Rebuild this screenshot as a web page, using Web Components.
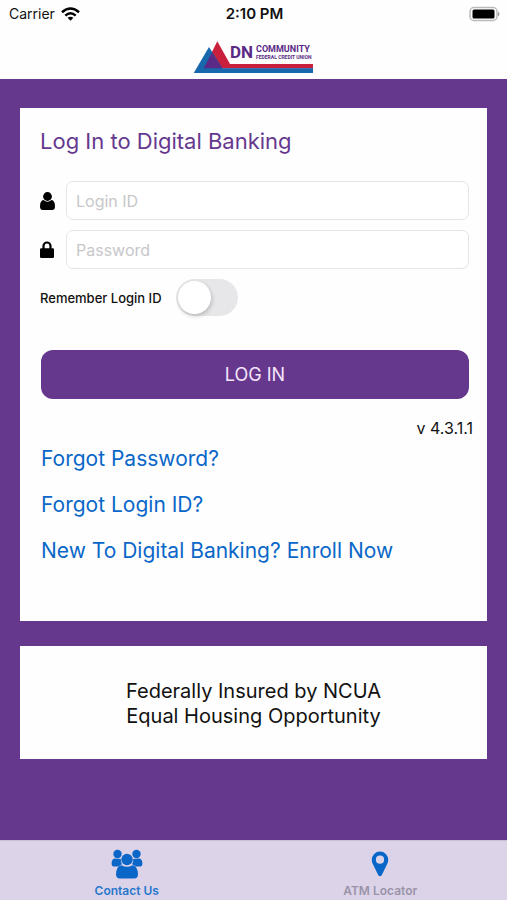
<!DOCTYPE html>
<html lang="en">
<head>
<meta charset="utf-8">
<meta name="viewport" content="width=device-width, initial-scale=1">
<title>DN Community Federal Credit Union</title>
<style>
  body { margin: 0; font-family: Inter, "Liberation Sans", sans-serif; color: #111; background: #65388e; --brand: #65388e; --link: #0a67c8; }
</style>
</head>
<body>
<bank-app>
  <status-bar slot="top" carrier="Carrier" time="2:10 PM"></status-bar>
  <bank-logo slot="top"></bank-logo>
  <bank-card>
    <login-form version="v 4.3.1.1"></login-form>
    <link-list>
      <a href="#password">Forgot Password?</a>
      <a href="#login-id">Forgot Login ID?</a>
      <a href="#enroll">New To Digital Banking? Enroll Now</a>
    </link-list>
  </bank-card>
  <bank-card>
    <legal-note>Federally Insured by NCUA<br>Equal Housing Opportunity</legal-note>
  </bank-card>
  <tab-item slot="tabs" href="#contact" active>
    <svg slot="icon" width="32" height="30" viewBox="0 0 32 30" fill="#0a67c8" aria-hidden="true">
      <circle cx="6.500" cy="5" r="4.200"/><circle cx="25.500" cy="5" r="4.200"/>
      <path d="M4 9.500 Q1 9.500 .6 14 Q.4 17.500 3 17.500 H7.500 Q9 16 11 15.300 Q9.500 13 9.800 10 Q8 9.800 7 9.800 Q5.500 9.800 4 9.500Z"/>
      <path d="M28 9.500 Q31 9.500 31.400 14 Q31.600 17.500 29 17.500 H24.500 Q23 16 21 15.300 Q22.500 13 22.200 10 Q24 9.800 25 9.800 Q26.500 9.800 28 9.500Z"/>
      <circle cx="16" cy="10.500" r="5.700"/>
      <path d="M10.500 16.200 Q16 19.500 21.500 16.200 Q26.500 17 27 25 Q27 29.500 23 29.500 H9 Q5 29.500 5 25 Q5.500 17 10.500 16.200Z"/>
    </svg>
    Contact Us
  </tab-item>
  <tab-item slot="tabs" href="#atm">
    <svg slot="icon" width="18" height="26" viewBox="0 0 18 26" fill="#0a67c8" aria-hidden="true">
      <path fill-rule="evenodd" d="M9 .5 A8.200 8.200 0 0 1 17.200 8.700 Q17.200 11 16.200 13 L10.700 24.200 Q9 26.500 7.300 24.200 L1.800 13 Q.8 11 .8 8.700 A8.200 8.200 0 0 1 9 .5Z M9 4.600 A4.100 4.100 0 1 0 9 12.800 A4.100 4.100 0 1 0 9 4.600Z"/>
    </svg>
    ATM Locator
  </tab-item>
</bank-app>

<script>
class BaseElement extends HTMLElement {
  constructor() {
    super();
    this.attachShadow({ mode: "open" });
  }
  connectedCallback() {
    this.shadowRoot.innerHTML = this.render();
  }
}

customElements.define("bank-app", class extends BaseElement {
  render() {
    return `<style>
      :host { display: flex; flex-direction: column; min-height: 100vh; background: var(--brand); }
      header { background: #fefefe; }
      main { flex: 1; display: flex; flex-direction: column; gap: 25px; padding: 29px 20px; }
      nav { display: flex; height: 60px; background: #dcd3e8; box-shadow: inset 0 1px #c9bdd8; }
    </style>
    <header><slot name="top"></slot></header>
    <main><slot></slot></main>
    <nav aria-label="Main"><slot name="tabs"></slot></nav>`;
  }
});

customElements.define("status-bar", class extends BaseElement {
  render() {
    return `<style>
      :host { display: grid; grid-template-columns: 1fr auto 1fr; align-items: center; height: 27px; padding: 0 7px 0 9px; font-size: 14px; line-height: 20px; }
      .left { display: flex; align-items: center; gap: 6px; }
      .time { font-weight: 600; font-size: 15px; }
      .battery { justify-self: end; }
      svg { display: block; }
    </style>
    <span class="left">${this.getAttribute("carrier")}
      <svg width="19" height="14" viewBox="0 0 19 14" fill="none" stroke="#000" stroke-width="2.500" aria-label="Wi-Fi">
        <path d="M1 5.200 Q9.500 -2.200 18 5.200"/><path d="M4.300 8.600 Q9.500 4 14.700 8.600"/>
        <path d="M9.500 13.800 L6.600 10.800 Q9.500 8.600 12.400 10.800Z" fill="#000" stroke="none"/>
      </svg>
    </span>
    <span class="time">${this.getAttribute("time")}</span>
    <svg class="battery" width="31" height="16" viewBox="0 0 31 16" aria-label="Battery full">
      <rect x="1" y="1.500" width="27" height="13" rx="4" fill="#fff" stroke="#bbb" stroke-width="1.500"/>
      <rect x="3.500" y="3.500" width="22" height="9" rx="1.500" fill="#000"/>
      <path d="M29 5.500 Q32 8 29 10.500Z" fill="#999"/>
    </svg>`;
  }
});

customElements.define("bank-logo", class extends BaseElement {
  render() {
    return `<style>
      :host { display: flex; justify-content: center; height: 52px; }
      svg { display: block; margin-top: 13px; }
      text { font-family: Roboto, sans-serif; font-weight: 700; fill: #5a2a86; }
    </style>
    <svg width="121" height="36" viewBox="0 0 121 36" role="img" aria-label="DN Community Federal Credit Union">
      <path d="M24.300 1.300 L37 24 H120 V28.500 H10.700Z" fill="#c9203d"/>
      <path d="M16 7 L.7 33 H120 V28.300 H29.500Z" fill="#1768ad"/>
      <path d="M19 12.500 L10.700 28.300 H29.500Z" fill="#5a2a86"/>
      <text x="37" y="18" font-size="17">DN</text>
      <text x="63" y="12" font-size="9">COMMUNITY</text>
      <text x="63" y="19" font-size="5">FEDERAL CREDIT UNION</text>
    </svg>`;
  }
});

customElements.define("bank-card", class extends BaseElement {
  render() {
    return `<style>
      :host { display: block; background: #fefefe; padding: 18px 14px 0 20px; }
    </style><slot></slot>`;
  }
});

customElements.define("login-form", class extends BaseElement {
  render() {
    return `<style>
      :host { display: block; }
      h1 { margin: 0 0 25px; font-size: 22px; line-height: 30px; font-weight: 400; color: var(--brand); }
      form { display: flex; flex-direction: column; padding-right: 4px; }
      .field { display: flex; align-items: center; gap: 10px; margin-bottom: 10px; }
      .field label { display: flex; width: 16px; }
      .field input { flex: 1; min-width: 0; box-sizing: border-box; height: 39px; padding: 0 9px; border: 1px solid #e6e6e8; border-radius: 7px; background: #fff; font: 16px/20px Inter, sans-serif; color: #111; }
      .field input::placeholder { color: #c7c7c9; opacity: 1; }
      .remember { display: flex; align-items: center; gap: 14px; font-size: 13px; line-height: 18px; font-weight: 500; }
      .remember input { appearance: none; box-sizing: border-box; width: 62px; height: 37px; margin: 0; padding: 2px; border-radius: 19px; background: #e7e7ea; }
      .remember input::before { content: ""; display: block; width: 33px; height: 33px; border-radius: 50%; background: #fff; box-shadow: 1px 2px 4px #0003; }
      .remember input:checked { background: var(--brand); }
      .remember input:checked::before { margin-left: auto; }
      button { height: 49px; margin-top: 34px; margin-left: 1px; border: 0; border-radius: 12px; background: var(--brand); color: #f6e6fb; font: 18px/24px Inter, sans-serif; }
      .version { margin: 19px 0 0; text-align: right; font-size: 16px; line-height: 20px; }
      svg { display: block; }
    </style>
    <h1>Log In to Digital Banking</h1>
    <form>
      <div class="field">
        <label for="login" aria-label="Login ID"><svg width="15" height="18" viewBox="0 0 15 18"><circle cx="7.500" cy="4.500" r="4.400"/><path d="M3.500 8 Q7.500 11.500 11.500 8 Q15 8.500 15 14.500 Q15 18 12 18 H3 Q0 18 0 14.500 Q0 8.500 3.500 8Z"/></svg></label>
        <input id="login" type="text" placeholder="Login ID">
      </div>
      <div class="field">
        <label for="password" aria-label="Password"><svg width="14" height="17" viewBox="0 0 14 17"><path d="M3.500 8 V5 A3.500 3.500 0 0 1 10.500 5 V8" fill="none" stroke="#000" stroke-width="2.200"/><rect y="7.200" width="14" height="9.800" rx="1.200"/></svg></label>
        <input id="password" type="password" placeholder="Password">
      </div>
      <div class="remember"><label for="remember">Remember Login ID</label><input id="remember" type="checkbox" role="switch"></div>
      <button type="button">LOG IN</button>
    </form>
    <p class="version">${this.getAttribute("version")}</p>`;
  }
});

customElements.define("link-list", class extends BaseElement {
  render() {
    return `<style>
      :host { display: flex; flex-direction: column; align-items: flex-start; gap: 16px; padding: 6px 0 55px 1px; font-size: 21px; line-height: 30px; }
      ::slotted(a) { color: var(--link); text-decoration: none; }
    </style><slot></slot>`;
  }
});

customElements.define("legal-note", class extends BaseElement {
  render() {
    return `<style>
      :host { display: block; padding: 15px 6px 30px 0; text-align: center; font-size: 20px; line-height: 25px; }
    </style><slot></slot>`;
  }
});

customElements.define("tab-item", class extends BaseElement {
  render() {
    const current = this.hasAttribute("active") ? 'aria-current="page"' : "";
    return `<style>
      :host { flex: 1; display: block; color: #9a93a8; }
      :host([active]) { color: #2878cc; }
      a { display: flex; flex-direction: column; align-items: center; padding-top: 8px; color: inherit; text-decoration: none; font-size: 12px; line-height: 16px; font-weight: 600; }
      .icon { display: flex; align-items: center; height: 31px; margin-bottom: 4px; }
    </style>
    <a href="${this.getAttribute("href")}" ${current}><span class="icon"><slot name="icon"></slot></span><span><slot></slot></span></a>`;
  }
});
</script>
</body>
</html>
